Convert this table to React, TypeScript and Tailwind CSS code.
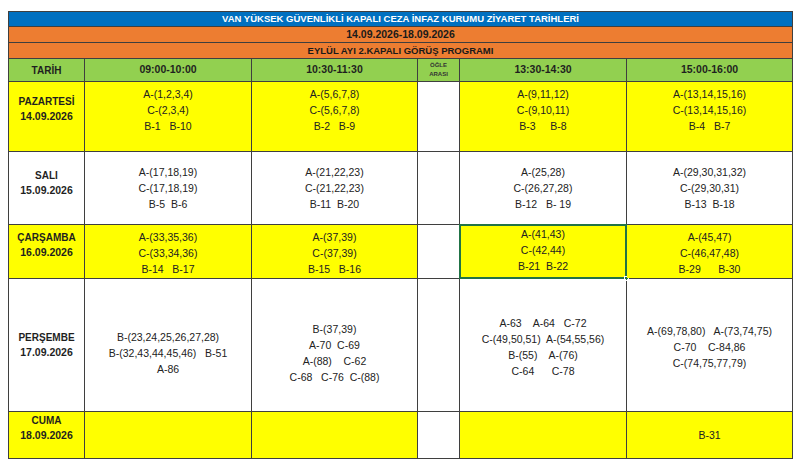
type Cell = { lines: string[]; pad?: string; selected?: boolean };

type Row = {
  day: string;
  date: string;
  dayPad: string;
  height: string;
  bg: string;
  cells: Cell[];
};

const rows: Row[] = [
  {
    day: "PAZARTESİ",
    date: "14.09.2026",
    dayPad: "pb-[16px]",
    height: "h-[70px]",
    bg: "bg-[#ffff00]",
    cells: [
      { lines: ["A-(1,2,3,4)", "C-(2,3,4)", "B-1   B-10"], pad: "pb-[14px]" },
      { lines: ["A-(5,6,7,8)", "C-(5,6,7,8)", "B-2   B-9"], pad: "pb-[14px]" },
      { lines: ["A-(9,11,12)", "C-(9,10,11)", "B-3     B-8"], pad: "pb-[14px]" },
      { lines: ["A-(13,14,15,16)", "C-(13,14,15,16)", "B-4   B-7"], pad: "pb-[14px]" },
    ],
  },
  {
    day: "SALI",
    date: "15.09.2026",
    dayPad: "pb-[10px]",
    height: "h-[73px]",
    bg: "bg-white",
    cells: [
      { lines: ["A-(17,18,19)", "C-(17,18,19)", "B-5  B-6"] },
      { lines: ["A-(21,22,23)", "C-(21,22,23)", "B-11  B-20"] },
      { lines: ["A-(25,28)", "C-(26,27,28)", "B-12   B- 19"] },
      { lines: ["A-(29,30,31,32)", "C-(29,30,31)", "B-13  B-18"] },
    ],
  },
  {
    day: "ÇARŞAMBA",
    date: "16.09.2026",
    dayPad: "pb-[14px]",
    height: "h-[54px]",
    bg: "bg-[#ffff00]",
    cells: [
      { lines: ["A-(33,35,36)", "C-(33,34,36)", "B-14   B-17"], pad: "pt-[2px]" },
      { lines: ["A-(37,39)", "C-(37,39)", "B-15   B-16"], pad: "pt-[2px]" },
      { lines: ["A-(41,43)", "C-(42,44)", "B-21  B-22"], pad: "pb-[4px]", selected: true },
      { lines: ["A-(45,47)", "C-(46,47,48)", "B-29      B-30"], pad: "pt-[2px]" },
    ],
  },
  {
    day: "PERŞEMBE",
    date: "17.09.2026",
    dayPad: "",
    height: "h-[133px]",
    bg: "bg-white",
    cells: [
      { lines: ["B-(23,24,25,26,27,28)", "B-(32,43,44,45,46)   B-51", "A-86"], pad: "pt-[16px]" },
      { lines: ["B-(37,39)", "A-70  C-69", "A-(88)    C-62", "C-68   C-76  C-(88)"], pad: "pt-[16px]" },
      { lines: ["A-63    A-64   C-72", "C-(49,50,51)  A-(54,55,56)", "B-(55)    A-(76)", "C-64      C-78"], pad: "pt-[3px]" },
      { lines: ["A-(69,78,80)   A-(73,74,75)", "C-70    C-84,86", "C-(74,75,77,79)"], pad: "pt-[3px]" },
    ],
  },
  {
    day: "CUMA",
    date: "18.09.2026",
    dayPad: "pb-[14px]",
    height: "h-[47px]",
    bg: "bg-[#ffff00]",
    cells: [{ lines: [] }, { lines: [] }, { lines: [] }, { lines: ["B-31"] }],
  },
];

const line = "border border-[#3f3f3f]";

function SlotCell({ cell, bg }: { cell: Cell; bg: string }) {
  return (
    <td className={`${line} ${bg} relative p-0 text-center align-middle`}>
      <div className={`flex flex-col items-center ${cell.pad ?? ""}`}>
        {cell.lines.map((l, i) => (
          <span key={i} className="whitespace-pre text-[10.5px] leading-[16px] text-[#222]">
            {l}
          </span>
        ))}
      </div>
      {cell.selected && (
        <>
          <div className="pointer-events-none absolute -inset-px border-2 border-[#217346]" />
          <div className="absolute -bottom-[3px] -right-[3px] h-[5px] w-[5px] border border-white bg-[#217346]" />
        </>
      )}
    </td>
  );
}

export default function App() {
  return (
    <div className="min-h-[466px] bg-white pl-2 pt-[11px] font-['Liberation_Sans',Arial,sans-serif]">
      <table className="w-[784px] table-fixed border-collapse">
        <colgroup>
          <col className="w-[76px]" />
          <col className="w-[167px]" />
          <col className="w-[166px]" />
          <col className="w-[42px]" />
          <col className="w-[167px]" />
          <col className="w-[166px]" />
        </colgroup>
        <tbody>
          <tr className="h-[15px]">
            <td colSpan={6} className={`${line} bg-[#0070c0] p-0 text-center text-[9.5px] font-bold leading-[14px] text-white`}>
              VAN YÜKSEK GÜVENLİKLİ KAPALI CEZA İNFAZ KURUMU ZİYARET TARİHLERİ
            </td>
          </tr>
          <tr className="h-[16px]">
            <td colSpan={6} className={`${line} bg-[#ed7d31] p-0 text-center text-[10.5px] font-bold leading-[15px] text-[#1a1a1a]`}>
              14.09.2026-18.09.2026
            </td>
          </tr>
          <tr className="h-[16px]">
            <td colSpan={6} className={`${line} bg-[#ed7d31] p-0 text-center text-[9.5px] font-bold leading-[15px] text-[#1a1a1a]`}>
              EYLÜL AYI 2.KAPALI GÖRÜŞ PROGRAMI
            </td>
          </tr>
          <tr className="h-[23px] bg-[#92d050] text-center text-[10.5px] font-bold text-[#1f1f1f]">
            <td className={`${line} p-0 text-[10px]`}>TARİH</td>
            <td className={`${line} p-0`}>09:00-10:00</td>
            <td className={`${line} p-0`}>10:30-11:30</td>
            <td className={`${line} p-0`}>
              <div className="flex flex-col items-center text-[6px] leading-[9px] text-[#333]">
                <span>ÖĞLE</span>
                <span>ARASI</span>
              </div>
            </td>
            <td className={`${line} p-0`}>13:30-14:30</td>
            <td className={`${line} p-0`}>15:00-16:00</td>
          </tr>
          {rows.map((r) => (
            <tr key={r.day} className={r.height}>
              <td className={`${line} ${r.bg} p-0 text-center align-middle`}>
                <div className={`flex flex-col items-center font-bold text-[#1f1f1f] ${r.dayPad}`}>
                  <span className="text-[10px] leading-[15px]">{r.day}</span>
                  <span className="text-[10.5px] leading-[15px]">{r.date}</span>
                </div>
              </td>
              <SlotCell cell={r.cells[0]} bg={r.bg} />
              <SlotCell cell={r.cells[1]} bg={r.bg} />
              <td className={`${line} bg-white p-0`} />
              <SlotCell cell={r.cells[2]} bg={r.bg} />
              <SlotCell cell={r.cells[3]} bg={r.bg} />
            </tr>
          ))}
        </tbody>
      </table>
    </div>
  );
}
